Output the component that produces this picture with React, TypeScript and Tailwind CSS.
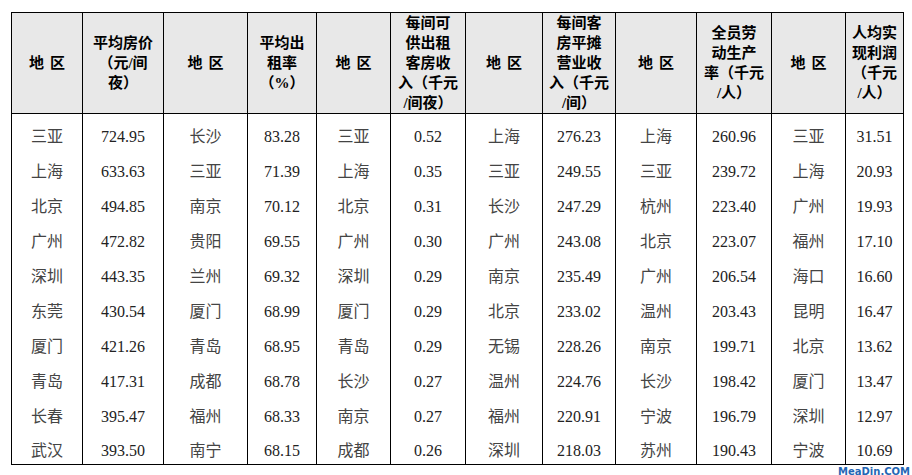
import React from "react";

const colWidths = [71, 81, 84, 69, 74, 75, 77, 73, 81, 75, 74, 58];

const headers: string[][] = [
  [],
  ["平均房价", "（元/间", "夜）"],
  [],
  ["平均出", "租率", "（%）"],
  [],
  ["每间可", "供出租", "客房收", "入（千元", "/间夜）"],
  [],
  ["每间客", "房平摊", "营业收", "入（千元", "/间）"],
  [],
  ["全员劳", "动生产", "率（千元", "/人）"],
  [],
  ["人均实", "现利润", "（千元", "/人）"],
];

const rows: string[][] = [
  ["三亚", "724.95", "长沙", "83.28", "三亚", "0.52", "上海", "276.23", "上海", "260.96", "三亚", "31.51"],
  ["上海", "633.63", "三亚", "71.39", "上海", "0.35", "三亚", "249.55", "三亚", "239.72", "上海", "20.93"],
  ["北京", "494.85", "南京", "70.12", "北京", "0.31", "长沙", "247.29", "杭州", "223.40", "广州", "19.93"],
  ["广州", "472.82", "贵阳", "69.55", "广州", "0.30", "广州", "243.08", "北京", "223.07", "福州", "17.10"],
  ["深圳", "443.35", "兰州", "69.32", "深圳", "0.29", "南京", "235.49", "广州", "206.54", "海口", "16.60"],
  ["东莞", "430.54", "厦门", "68.99", "厦门", "0.29", "北京", "233.02", "温州", "203.43", "昆明", "16.47"],
  ["厦门", "421.26", "青岛", "68.95", "青岛", "0.29", "无锡", "228.26", "南京", "199.71", "北京", "13.62"],
  ["青岛", "417.31", "成都", "68.78", "长沙", "0.27", "温州", "224.76", "长沙", "198.42", "厦门", "13.47"],
  ["长春", "395.47", "福州", "68.33", "南京", "0.27", "福州", "220.91", "宁波", "196.79", "深圳", "12.97"],
  ["武汉", "393.50", "南宁", "68.15", "成都", "0.26", "深圳", "218.03", "苏州", "190.43", "宁波", "10.69"],
];

const cjk = { fontFamily: '"Liberation Serif", "Noto Sans CJK SC", serif' };

export default function App() {
  return (
    <div className="w-[912px] h-[475px] bg-white overflow-hidden" style={cjk}>
      <table className="ml-[11px] mt-[12px] w-[892px] table-fixed border-collapse">
        <colgroup>
          {colWidths.map((w, i) => (
            <col key={i} style={{ width: w }} />
          ))}
        </colgroup>
        <thead>
          <tr className="h-[100px] bg-[#e8e8e8]">
            {headers.map((lines, i) => (
              <th
                key={i}
                className="border border-black p-0 align-middle text-center text-[15px] leading-[20px] font-bold text-black"
              >
                {lines.length === 0 ? (
                  <span className="inline-flex gap-[6px]">
                    <span>地</span>
                    <span>区</span>
                  </span>
                ) : (
                  lines.map((l, j) => <div key={j}>{l}</div>)
                )}
              </th>
            ))}
          </tr>
        </thead>
        <tbody>
          {rows.map((r, ri) => {
            const first = ri === 0;
            const last = ri === rows.length - 1;
            return (
              <tr key={ri} className={first ? "h-[40px]" : last ? "h-[30px]" : "h-[35px]"}>
                {r.map((c, ci) => (
                  <td
                    key={ci}
                    className={
                      "border-x border-black p-0 text-center text-[16px] " +
                      (ci % 2 === 0 ? "text-[#444] " : "text-[#222] ") +
                      (first
                        ? "align-bottom leading-[35px]"
                        : last
                        ? "align-top pt-[3px] leading-[27px] border-b"
                        : "align-middle leading-[35px]")
                    }
                  >
                    {c}
                  </td>
                ))}
              </tr>
            );
          })}
        </tbody>
      </table>
      <div className="flex justify-end pr-[2px] pt-[1px]">
        <span
          className="text-[10px] leading-[11px] font-bold text-[#2466b5]"
          style={{ fontFamily: '"DejaVu Sans", sans-serif' }}
        >
          MeaDin.COM
        </span>
      </div>
    </div>
  );
}
